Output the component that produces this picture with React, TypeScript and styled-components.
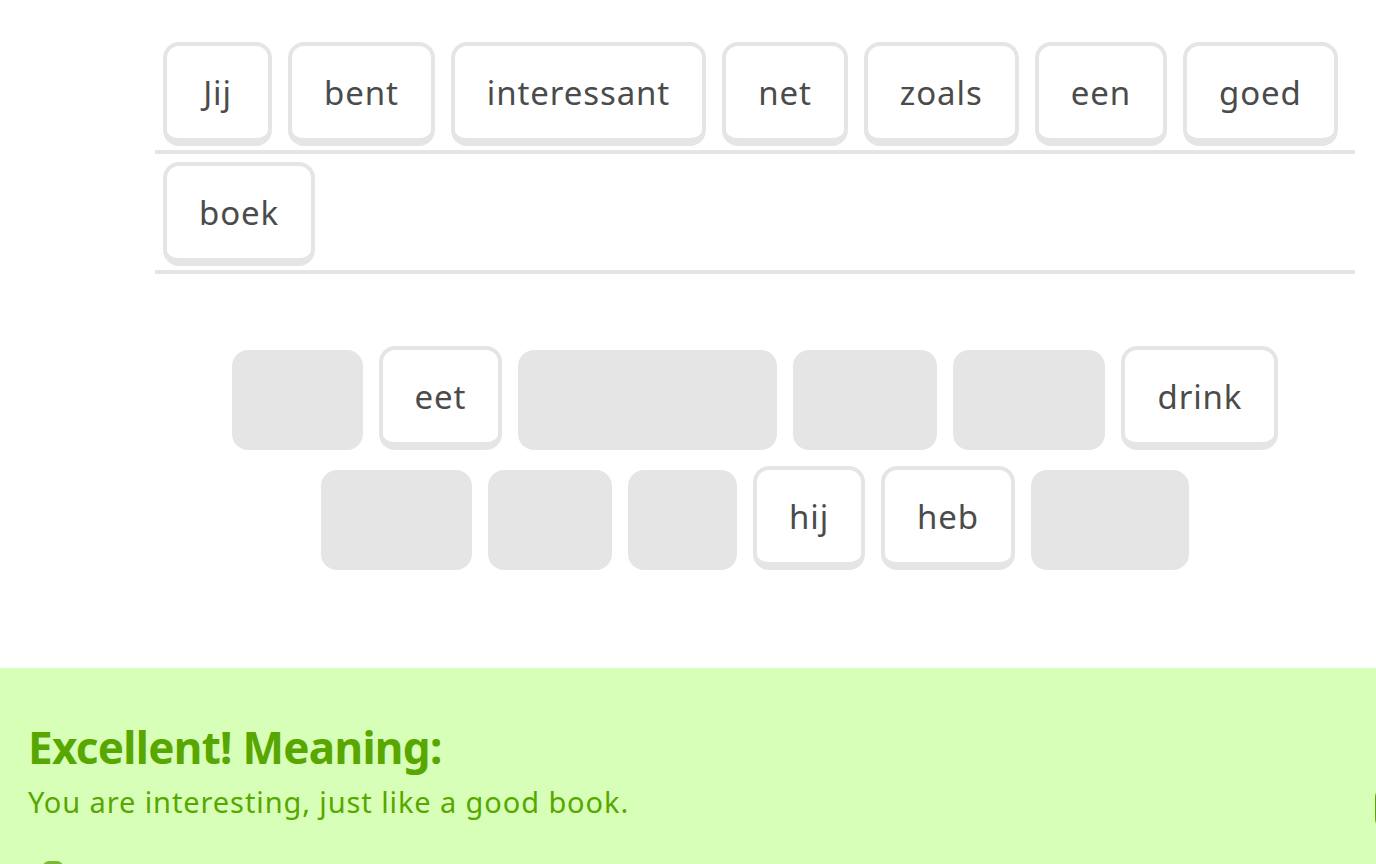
import React from 'react';
import styled, { createGlobalStyle } from 'styled-components';

const GlobalStyle = createGlobalStyle`
  html, body {
    margin: 0;
    padding: 0;
    background: #ffffff;
    overflow: hidden;
  }
  body {
    font-family: "Noto Sans", "Liberation Sans", sans-serif;
  }
`;

const Page = styled.div`
  width: 1376px;
  height: 864px;
  overflow: hidden;
  display: flex;
  flex-direction: column;
`;

const Challenge = styled.main`
  width: 1200px;
  margin-left: 155px;
  padding-top: 34px;
`;

const AnswerLine = styled.div`
  display: flex;
  align-items: flex-end;
  gap: 16px;
  height: 104px;
  padding: 8px 8px 4px;
  border-bottom: 4px solid #e5e5e5;
`;

const Tile = styled.button`
  box-sizing: border-box;
  height: 104px;
  min-width: 109px;
  padding: 0 32px;
  border: 4px solid #e5e5e5;
  border-bottom-width: 8px;
  border-radius: 16px;
  background: #ffffff;
  color: #4b4b4b;
  font-family: "Noto Sans", "Liberation Sans", sans-serif;
  font-size: 33px;
  letter-spacing: 0.9px;
  line-height: 1;
  display: flex;
  align-items: center;
  justify-content: center;
  flex-shrink: 0;
  cursor: pointer;
`;

const WordBank = styled.section`
  margin-top: 72px;
  display: flex;
  flex-direction: column;
  align-items: center;
  gap: 16px;
`;

const BankRow = styled.div`
  display: flex;
  align-items: flex-end;
  gap: 16px;
`;

const Slot = styled.div<{ $w: number }>`
  width: ${p => p.$w}px;
  height: 100px;
  border-radius: 16px;
  background: #e5e5e5;
  flex-shrink: 0;
`;

const Footer = styled.footer`
  margin-top: 98px;
  flex: 1;
  background: #d7ffb8;
  display: flex;
  padding-left: 28px;
`;

const Feedback = styled.div`
  flex: 0 0 1347px;
  padding-top: 53px;
`;

const Title = styled.h2`
  margin: 0;
  font-size: 44px;
  line-height: 52px;
  font-weight: 700;
  letter-spacing: -0.7px;
  color: #58a700;
`;

const Meaning = styled.p`
  margin: 11px 0 0;
  font-size: 29px;
  line-height: 36px;
  letter-spacing: 0.9px;
  color: #58a700;
`;

const ReportRow = styled.div`
  margin-top: 41px;
  padding-left: 15px;
`;

const ReportIcon = styled.span`
  display: block;
  width: 20px;
  height: 20px;
  border-radius: 6px;
  background: #79b933;
`;

const ContinueButton = styled.button`
  flex-shrink: 0;
  align-self: flex-start;
  margin-top: 114px;
  width: 150px;
  height: 52px;
  border: none;
  border-radius: 16px;
  background: #58a700;
`;

const answer = [
  ['Jij', 'bent', 'interessant', 'net', 'zoals', 'een', 'goed'],
  ['boek'],
];

type BankItem = { word: string } | { slot: number };

const bank: BankItem[][] = [
  [{ slot: 131 }, { word: 'eet' }, { slot: 259 }, { slot: 144 }, { slot: 152 }, { word: 'drink' }],
  [{ slot: 151 }, { slot: 124 }, { slot: 109 }, { word: 'hij' }, { word: 'heb' }, { slot: 158 }],
];

export default function App() {
  return (
    <Page>
      <GlobalStyle />
      <Challenge>
        {answer.map((line, i) => (
          <AnswerLine key={i}>
            {line.map(w => <Tile key={w}>{w}</Tile>)}
          </AnswerLine>
        ))}
        <WordBank>
          {bank.map((row, i) => (
            <BankRow key={i}>
              {row.map((item, j) =>
                'word' in item
                  ? <Tile key={j}>{item.word}</Tile>
                  : <Slot key={j} $w={item.slot} />
              )}
            </BankRow>
          ))}
        </WordBank>
      </Challenge>
      <Footer>
        <Feedback>
          <Title>Excellent! Meaning:</Title>
          <Meaning>You are interesting, just like a good book.</Meaning>
          <ReportRow><ReportIcon /></ReportRow>
        </Feedback>
        <ContinueButton aria-label="Continue" />
      </Footer>
    </Page>
  );
}
